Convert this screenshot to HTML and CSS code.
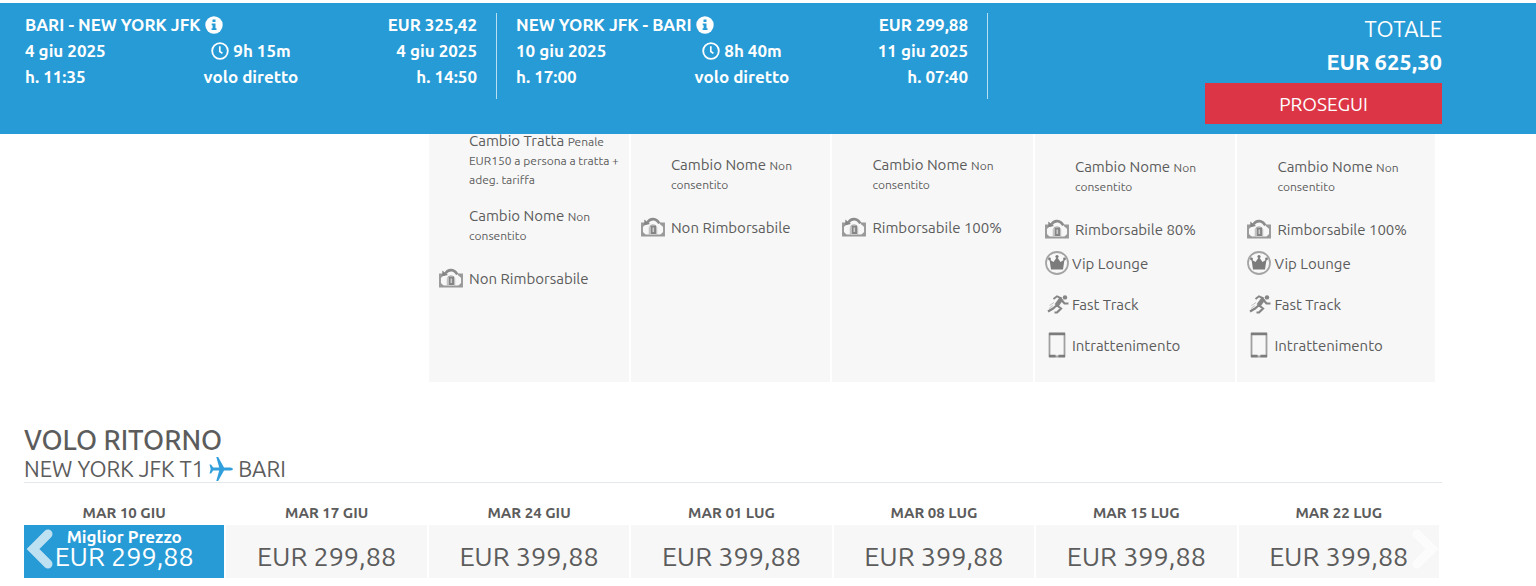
FILE: index.html
```html
<!DOCTYPE html>
<html lang="it">
<head>
<meta charset="utf-8">
<title>Scelta voli</title>
<link rel="stylesheet" href="styles.css">
</head>
<body>
<svg class="sprite" aria-hidden="true">
  <symbol id="info" viewBox="0 0 18 18">
    <circle cx="9" cy="9" r="8.7" fill="#fff"/>
    <path d="M7.5 3.4h3v2.7h-3zM6.7 7.4h3.8v4.8h1v1.8H6.6v-1.8h1V9.200h-.9z" fill="#279bd6"/>
  </symbol>
  <symbol id="clock" viewBox="0 0 18 18">
    <circle cx="9" cy="9" r="7.8" fill="none" stroke="#fff" stroke-width="1.8"/>
    <path d="M8.800 4.200v5.300l2.600 1.900" fill="none" stroke="#fff" stroke-width="1.7"/>
  </symbol>
  <symbol id="refund" viewBox="0 0 24 20">
    <path d="M6 6.500H1v12h22v-12h-4" fill="none" stroke="#999" stroke-width="1.900"/>
    <path d="M1 9.500l3-3M23 9.500l-3-3M1 15.500l3 3M23 15.500l-3 3" stroke="#999" stroke-width="2"/>
    <path d="M6.500 5.500C9 .8 15.500 .8 18.300 6.500" fill="none" stroke="#8c8c8c" stroke-width="2.600"/>
    <path d="M3.300 2.500v5.800l5.700-1.200z" fill="#858585"/>
    <path d="M8.300 17.500V10.500q.4-2.700 3.700-2.800 3.300.1 3.700 2.800v7" fill="none" stroke="#b4b4b4" stroke-width="1"/>
    <rect x="9.500" y="8.500" width="5.500" height="8.500" fill="#858585"/>
    <path d="M12.300 10.500v4.500" stroke="#ccc" stroke-width="1.600"/>
  </symbol>
  <symbol id="crown" viewBox="0 0 24 24">
    <circle cx="12" cy="12" r="11" fill="#f8f8f8" stroke="#a4a4a4" stroke-width="1.800"/>
    <path d="M6 18.500L4.500 8.500l4 2.500L12 6l3.500 5 4-2.500L18 18.500z" fill="#7c7c7c"/>
    <circle cx="4.500" cy="8" r="1.400" fill="#7c7c7c"/><circle cx="12" cy="5.500" r="1.600" fill="#7c7c7c"/><circle cx="19.500" cy="8" r="1.400" fill="#7c7c7c"/>
  </symbol>
  <symbol id="runner" viewBox="0 0 24 24">
    <circle cx="20" cy="5.400" r="2.200" fill="#858585"/>
    <path d="M8.500 7L12 4.300l5 2.200" fill="none" stroke="#858585" stroke-width="1.900"/>
    <path d="M16.500 6.500l-5 7" stroke="#858585" stroke-width="4.600"/>
    <path d="M17 8.500l2.500 3h4M11.500 13.500L8 16.500 3 19.500M11.500 13l4.500 3.500-4 4H9.500" fill="none" stroke="#858585" stroke-width="2.200"/>
    <path d="M9 10.500l-4.500 3M8 13.500l-4 3" stroke="#c4c4c4" stroke-width="1"/>
  </symbol>
  <symbol id="tablet" viewBox="0 0 24 26">
    <path d="M4.500 1.500h15v23h-15z" fill="none" stroke="#a0a0a0" stroke-width="1.800" stroke-linejoin="round"/>
    <path d="M4 2h16M4 24h6.500M13.500 24H20" stroke="#7c7c7c" stroke-width="2.400"/>
    <path d="M11 24.500h2" stroke="#aaa" stroke-width="1"/>
  </symbol>
  <symbol id="plane" viewBox="0 0 24 24">
    <path d="M24 12c0-1.100-1.800-1.600-4-1.600h-5L9.200 0H7.300l2.900 10.400H4.200L2 7.500H.5L1.700 12 .5 16.500H2l2.200-2.900h6L7.300 24h1.900L15 13.600h5c2.200 0 4-.5 4-1.600z" fill="#329fdd"/>
  </symbol>
</svg>

<header class="summary">
  <section class="leg">
    <div class="leg-row"><span>BARI - NEW YORK JFK <svg class="glyph"><use href="#info"/></svg></span><span>EUR 325,42</span></div>
    <div class="leg-grid">
      <span>4 giu 2025</span><span><svg class="glyph"><use href="#clock"/></svg> 9h 15m</span><span>4 giu 2025</span>
      <span>h. 11:35</span><span>volo diretto</span><span>h. 14:50</span>
    </div>
  </section>
  <section class="leg">
    <div class="leg-row"><span>NEW YORK JFK - BARI <svg class="glyph"><use href="#info"/></svg></span><span>EUR 299,88</span></div>
    <div class="leg-grid">
      <span>10 giu 2025</span><span><svg class="glyph"><use href="#clock"/></svg> 8h 40m</span><span>11 giu 2025</span>
      <span>h. 17:00</span><span>volo diretto</span><span>h. 07:40</span>
    </div>
  </section>
  <section class="total">
    <span>TOTALE</span>
    <strong>EUR 625,30</strong>
    <button class="proceed" type="button">PROSEGUI</button>
  </section>
</header>

<main>
  <div class="fares">
    <div class="fare">
      <p class="rule">Cambio Tratta <small>Penale<br>EUR150 a persona a tratta +<br>adeg. tariffa</small></p>
      <p class="rule">Cambio Nome <small>Non<br>consentito</small></p>
      <p class="refund"><svg><use href="#refund"/></svg>Non Rimborsabile</p>
    </div>
    <div class="fare fare-mid">
      <p class="rule">Cambio Nome <small>Non<br>consentito</small></p>
      <p class="refund"><svg><use href="#refund"/></svg>Non Rimborsabile</p>
    </div>
    <div class="fare fare-mid">
      <p class="rule">Cambio Nome <small>Non<br>consentito</small></p>
      <p class="refund"><svg><use href="#refund"/></svg>Rimborsabile 100%</p>
    </div>
    <div class="fare fare-top">
      <p class="rule">Cambio Nome <small>Non<br>consentito</small></p>
      <p class="refund"><svg><use href="#refund"/></svg>Rimborsabile 80%</p>
      <ul class="extras">
        <li><svg><use href="#crown"/></svg>Vip Lounge</li>
        <li><svg><use href="#runner"/></svg>Fast Track</li>
        <li><svg><use href="#tablet"/></svg>Intrattenimento</li>
      </ul>
    </div>
    <div class="fare fare-top">
      <p class="rule">Cambio Nome <small>Non<br>consentito</small></p>
      <p class="refund"><svg><use href="#refund"/></svg>Rimborsabile 100%</p>
      <ul class="extras">
        <li><svg><use href="#crown"/></svg>Vip Lounge</li>
        <li><svg><use href="#runner"/></svg>Fast Track</li>
        <li><svg><use href="#tablet"/></svg>Intrattenimento</li>
      </ul>
    </div>
  </div>

  <div class="heading">
    <h2>VOLO RITORNO</h2>
    <p><span>NEW YORK JFK T1</span><svg class="plane"><use href="#plane"/></svg><span>BARI</span></p>
  </div>

  <div class="dates">
    <div class="date"><span>MAR 10 GIU</span><button class="price best" type="button"><b>Miglior Prezzo</b>EUR 299,88</button></div>
    <div class="date"><span>MAR 17 GIU</span><button class="price" type="button">EUR 299,88</button></div>
    <div class="date"><span>MAR 24 GIU</span><button class="price" type="button">EUR 399,88</button></div>
    <div class="date"><span>MAR 01 LUG</span><button class="price" type="button">EUR 399,88</button></div>
    <div class="date"><span>MAR 08 LUG</span><button class="price" type="button">EUR 399,88</button></div>
    <div class="date"><span>MAR 15 LUG</span><button class="price" type="button">EUR 399,88</button></div>
    <div class="date"><span>MAR 22 LUG</span><button class="price" type="button">EUR 399,88</button></div>
    <button class="arrow prev" type="button" aria-label="Date precedenti"><svg viewBox="0 0 28 42"><path d="M22 6L7 21l15 15" fill="none" stroke="#fff" stroke-width="9" stroke-linecap="round"/></svg></button>
    <button class="arrow next" type="button" aria-label="Date successive"><svg viewBox="0 0 28 42"><path d="M6 6l15 15L6 36" fill="none" stroke="#fff" stroke-width="9" stroke-linecap="round"/></svg></button>
  </div>
</main>
</body>
</html>
```
FILE: styles.css
```css
* {
  box-sizing: border-box;
}

body {
  margin: 0;
  padding-top: 3px;
  background: #fff;
  color: #5c5c5c;
  font-family: Ubuntu, "Noto Sans", sans-serif;
  font-size: 15px;
}

p,
h2,
ul {
  margin: 0;
  padding: 0;
  font-weight: 400;
}

button {
  border: 0;
  padding: 0;
  font-family: inherit;
  cursor: pointer;
}

.sprite {
  position: absolute;
  width: 0;
  height: 0;
}

/* Summary bar: stays above the fares that scroll beneath it */
.summary {
  position: sticky;
  top: 0;
  z-index: 1;
  display: grid;
  grid-template-columns: 473fr 491fr 454fr;
  padding: 9px 94px 10px 24px;
  background: #279bd6;
  color: #fff;
  white-space: nowrap;
}

.leg {
  height: 86px;
  margin-top: 1px;
  padding: 0 19px 0 1px;
  border-right: 1px solid #b9def2;
  font-size: 17px;
  font-weight: 700;
  line-height: 26px;
}

.leg + .leg {
  padding-left: 19px;
}

.leg-row {
  display: flex;
  justify-content: space-between;
  margin-bottom: 2px;
  line-height: 23px;
}

.leg-grid {
  display: grid;
  grid-template-columns: 1fr 1fr 1fr;
}

.leg-grid span:nth-child(3n + 2) {
  text-align: center;
}

.leg-grid span:nth-child(3n) {
  text-align: right;
}

.glyph {
  width: 18px;
  height: 18px;
  vertical-align: -3px;
}

.total {
  display: flex;
  flex-direction: column;
  align-items: flex-end;
  font-size: 22px;
  line-height: 33px;
}

.proceed {
  width: 237px;
  height: 41px;
  margin-top: 5px;
  background: #dc3545;
  color: #fff;
  font-size: 19px;
}

main {
  padding: 0 94px 0 24px;
}

.fares {
  display: grid;
  grid-template-columns: 199fr 200fr 201fr 201fr 198fr;
  gap: 2px;
  margin: -3px 7px 0 405px;
  min-height: 251px;
  line-height: 19px;
  white-space: nowrap;
}

.fare {
  padding: 0 10px;
  background: #f7f7f7;
}

.fare-mid {
  padding-top: 24px;
}

.fare-top {
  padding-top: 26px;
}

.rule {
  padding-left: 30px;
  margin-bottom: 18px;
}

.rule small {
  font-size: 12px;
  line-height: 15px;
}

.refund {
  display: flex;
  align-items: center;
  gap: 6px;
  margin-top: 24px;
}

.refund svg {
  width: 24px;
  height: 20px;
}

.extras {
  display: grid;
  gap: 17px;
  margin-top: 12px;
  list-style: none;
}

.extras li {
  display: flex;
  align-items: center;
  gap: 3px;
  height: 24px;
}

.extras svg {
  width: 24px;
  height: 26px;
}

.heading {
  margin-top: 42px;
  padding-bottom: 1px;
  border-bottom: 1px solid #e4e8eb;
}

.heading h2 {
  font-size: 27px;
  font-weight: 500;
  line-height: 33px;
}

.heading p {
  display: flex;
  align-items: flex-end;
  gap: 5px;
  font-size: 22px;
  line-height: 24px;
}

.plane {
  width: 24px;
  height: 24px;
}

.dates {
  position: relative;
  display: grid;
  grid-template-columns: repeat(7, 1fr);
  gap: 2px;
  margin: 18px 3px 0 0;
}

.date {
  display: flex;
  flex-direction: column;
  gap: 1px;
  font-weight: 700;
  line-height: 23px;
  text-align: center;
}

.price {
  display: flex;
  flex-direction: column;
  align-items: center;
  justify-content: flex-end;
  height: 53px;
  padding-bottom: 10px;
  background: #f7f7f7;
  color: #5c5c5c;
  font-size: 27px;
  line-height: 23px;
}

.best {
  background: #279bd6;
  color: #fff;
}

.best b {
  font-size: 17px;
  line-height: 16px;
}

.arrow {
  position: absolute;
  bottom: 8px;
  width: 28px;
  height: 42px;
  background: none;
  opacity: 0.7;
}

.prev {
  left: 2px;
}

.next {
  right: 0;
}
```
